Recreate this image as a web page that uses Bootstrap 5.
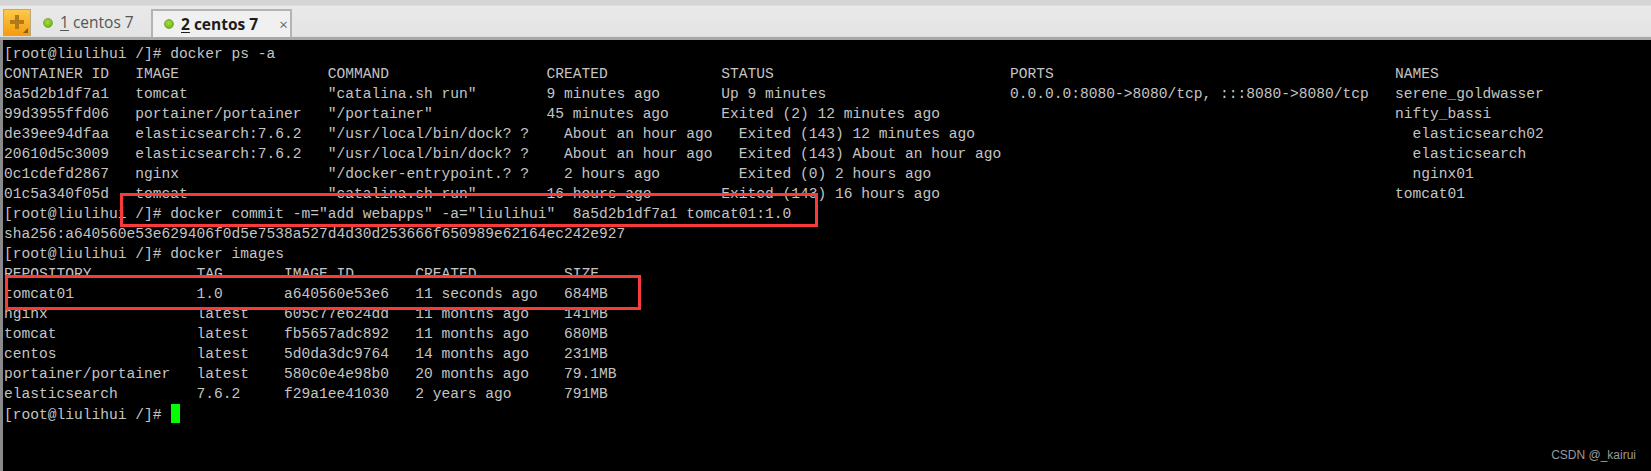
<!DOCTYPE html>
<html lang="en">
<head>
<meta charset="utf-8">
<title>Xshell</title>
<link href="https://cdn.jsdelivr.net/npm/bootstrap@5.3.0/dist/css/bootstrap.min.css" rel="stylesheet">
<style>
html,body{height:471px;overflow:hidden;background:#000}
.shell-window{height:471px;display:flex;flex-direction:column;position:relative;background:#000}
.tab-strip{height:40px;flex:none;background:linear-gradient(#d4d4d4,#d4d4d4 5px,#e9e9e9 6px,#e4e4e4 36px,#dcdcdc);padding:9px 0 0 3px;border-bottom:3px solid #a8a8a8;font-family:"Open Sans","Liberation Sans",sans-serif}
.add-tab{width:28px;height:27px;background:linear-gradient(#fcc94a,#f59c0c);border:1px solid #b9a77e;flex:none}
.add-tab svg{display:block}
.term-tab{height:27px;font-size:15.5px;color:#555;padding:0 0 0 12px;gap:7px;line-height:27px}
.term-tab u{text-underline-offset:2px}
.tab-off{width:120px}
.tab-on{width:141px;padding-left:11px;background:#f0f0f0;border:2px solid #b4b4b4;border-bottom:0;height:28px;font-weight:700;color:#1c1c1c}
.tab-dot{width:10px;height:10px;border-radius:50%;background:radial-gradient(circle at 45% 40%,#a6e22e,#5fa512);border:1px solid #7ca94a;flex:none}
.tab-x{font-size:15px;font-weight:400;color:#666;margin-left:14px}
.term-body{flex:1;border-left:3px solid #8a8a8a;padding:4px 0 0 1px;background:#000}
.term-text{margin:0;font-family:"Liberation Mono","Courier New",monospace;font-size:14.58px;line-height:20px;color:#c4c4c4;overflow:visible}
.cursor-block{display:inline-block;width:9px;height:19px;background:#00ff00;vertical-align:-4px;margin-left:1px}
.mark-box{position:absolute;border:3px solid #f93a3a}
.box-commit{left:120px;top:193px;width:698px;height:34px}
.box-image{left:5px;top:275px;width:636px;height:35px}
.stamp{position:absolute;right:15px;bottom:7px;font-family:"Liberation Sans",sans-serif;font-size:12px;color:#9a9a9a}
</style>
</head>
<body>
<div class="shell-window">
  <div class="tab-strip d-flex align-items-start">
    <div class="add-tab">
      <svg width="26" height="25" viewBox="0 0 26 25"><path d="M11 5h4v5h5v4h-5v5h-4v-5H6v-4h5z" fill="#b07a1c"/><path d="M19 23l5-5v5z" fill="#7a5a20"/></svg>
    </div>
    <div class="term-tab tab-off d-flex align-items-center"><span class="tab-dot"></span><span><u>1</u> centos 7</span></div>
    <div class="term-tab tab-on d-flex align-items-center"><span class="tab-dot"></span><span><u>2</u> centos 7</span><span class="tab-x">×</span></div>
  </div>
  <div class="term-body">
<pre class="term-text">[root@liulihui /]# docker ps -a
CONTAINER ID   IMAGE                 COMMAND                  CREATED             STATUS                           PORTS                                       NAMES
8a5d2b1df7a1   tomcat                "catalina.sh run"        9 minutes ago       Up 9 minutes                     0.0.0.0:8080-&gt;8080/tcp, :::8080-&gt;8080/tcp   serene_goldwasser
99d3955ffd06   portainer/portainer   "/portainer"             45 minutes ago      Exited (2) 12 minutes ago                                                    nifty_bassi
de39ee94dfaa   elasticsearch:7.6.2   "/usr/local/bin/dock? ?    About an hour ago   Exited (143) 12 minutes ago                                                  elasticsearch02
20610d5c3009   elasticsearch:7.6.2   "/usr/local/bin/dock? ?    About an hour ago   Exited (143) About an hour ago                                               elasticsearch
0c1cdefd2867   nginx                 "/docker-entrypoint.? ?    2 hours ago         Exited (0) 2 hours ago                                                       nginx01
01c5a340f05d   tomcat                "catalina.sh run"        16 hours ago        Exited (143) 16 hours ago                                                    tomcat01
[root@liulihui /]# docker commit -m="add webapps" -a="liulihui"  8a5d2b1df7a1 tomcat01:1.0
sha256:a640560e53e629406f0d5e7538a527d4d30d253666f650989e62164ec242e927
[root@liulihui /]# docker images
REPOSITORY            TAG       IMAGE ID       CREATED          SIZE
tomcat01              1.0       a640560e53e6   11 seconds ago   684MB
nginx                 latest    605c77e624dd   11 months ago    141MB
tomcat                latest    fb5657adc892   11 months ago    680MB
centos                latest    5d0da3dc9764   14 months ago    231MB
portainer/portainer   latest    580c0e4e98b0   20 months ago    79.1MB
elasticsearch         7.6.2     f29a1ee41030   2 years ago      791MB
[root@liulihui /]# <span class="cursor-block"></span></pre>
  </div>
  <div class="mark-box box-commit"></div>
  <div class="mark-box box-image"></div>
  <div class="stamp">CSDN @_kairui</div>
</div>
<script src="https://cdn.jsdelivr.net/npm/bootstrap@5.3.0/dist/js/bootstrap.bundle.min.js"></script>
</body>
</html>
